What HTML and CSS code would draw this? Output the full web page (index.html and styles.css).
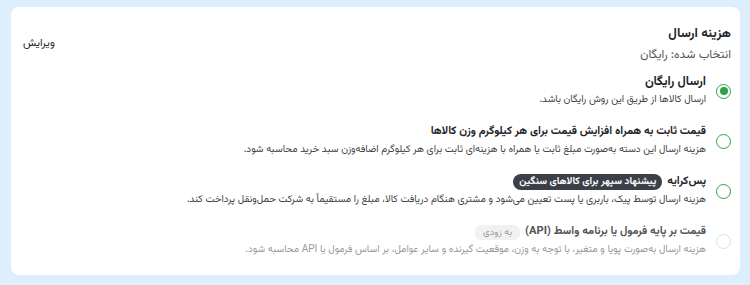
FILE: index.html
```html
<!DOCTYPE html>
<html lang="fa" dir="rtl">
<head>
<meta charset="utf-8">
<link rel="stylesheet" href="styles.css">
</head>
<body>
<div class="card">
  <div class="head">
    <div class="head-text">
      <div class="title">هزینه ارسال</div>
      <div class="sub">انتخاب شده: رایگان</div>
    </div>
    <a class="edit">ویرایش</a>
  </div>
  <div class="options">
    <div class="opt">
      <span class="radio checked"></span>
      <div class="opt-body">
        <div class="opt-title">ارسال رایگان</div>
        <div class="opt-desc">ارسال کالاها از طریق این روش رایگان باشد.</div>
      </div>
    </div>
    <div class="opt">
      <span class="radio"></span>
      <div class="opt-body">
        <div class="opt-title">قیمت ثابت به همراه افزایش قیمت برای هر کیلوگرم وزن کالاها</div>
        <div class="opt-desc">هزینه ارسال این دسته به‌صورت مبلغ ثابت یا همراه با هزینه‌ای ثابت برای هر کیلوگرم اضافه‌وزن سبد خرید محاسبه شود.</div>
      </div>
    </div>
    <div class="opt">
      <span class="radio"></span>
      <div class="opt-body">
        <div class="opt-title">پس‌کرایه <span class="badge-dark">پیشنهاد سپهر برای کالاهای سنگین</span></div>
        <div class="opt-desc">هزینه ارسال توسط پیک، باربری یا پست تعیین می‌شود و مشتری هنگام دریافت کالا، مبلغ را مستقیماً به شرکت حمل‌ونقل پرداخت کند.</div>
      </div>
    </div>
    <div class="opt disabled">
      <span class="radio"></span>
      <div class="opt-body">
        <div class="opt-title">قیمت بر پایه فرمول یا برنامه واسط (API) <span class="badge-soon">به زودی</span></div>
        <div class="opt-desc">هزینه ارسال به‌صورت پویا و متغیر، با توجه به وزن، موقعیت گیرنده و سایر عوامل، بر اساس فرمول یا API محاسبه شود.</div>
      </div>
    </div>
  </div>
</div>
</body>
</html>
```

FILE: styles.css
```css
html, body {
  margin: 0;
  height: 100%;
}
body {
  background: #ddeefd;
  padding: 7px 10px 10px 11px;
  box-sizing: border-box;
  font-family: "Vazirmatn", "Noto Sans Arabic", "Noto Naskh Arabic", "DejaVu Sans Condensed", "DejaVu Sans", sans-serif;
  color: #1f2329;
}
.card {
  background: #fff;
  border-radius: 8px;
  height: 268px;
  box-sizing: border-box;
  padding: 17px 9px 0 12px;
}
.head {
  display: flex;
  justify-content: space-between;
  align-items: center;
}
.title {
  font-size: 13px;
  font-weight: 700;
  line-height: 20px;
}
.sub {
  font-size: 12px;
  color: #555;
  line-height: 20px;
  margin-top: 1px;
}
.edit {
  font-size: 11px;
  color: #222;
  cursor: pointer;
  margin-top: -3px;
}
.options {
  display: flex;
  flex-direction: column;
  gap: 14px;
  margin-top: 8px;
}
.opt {
  display: flex;
  align-items: center;
  gap: 10px;
}
.radio {
  width: 15px;
  height: 15px;
  border: 1.5px solid #2ea14a;
  border-radius: 50%;
  box-sizing: border-box;
  flex: none;
  display: flex;
  align-items: center;
  justify-content: center;
}
.radio.checked::after {
  content: "";
  width: 8px;
  height: 8px;
  border-radius: 50%;
  background: #2ea14a;
}
.opt-title {
  font-size: 11.2px;
  font-weight: 700;
  line-height: 18px;
  display: flex;
  align-items: center;
  gap: 5px;
}
.opt:first-child .opt-title {
  font-size: 12.5px;
}
.opt-desc {
  font-size: 10px;
  color: #444;
  line-height: 18px;
}
.badge-dark {
  background: #3b4048;
  color: #fff;
  font-size: 10px;
  font-weight: 700;
  border-radius: 8px;
  padding: 0 6px;
  line-height: 16px;
}
.badge-soon {
  background: #f1f1f1;
  color: #999;
  font-size: 9.5px;
  font-weight: 400;
  border-radius: 6px;
  padding: 0 8px;
  line-height: 15px;
}
.disabled .opt-title { color: #555; }
.disabled .opt-desc { color: #999; }
.disabled .radio { border-color: #cfe8d5; }
```
